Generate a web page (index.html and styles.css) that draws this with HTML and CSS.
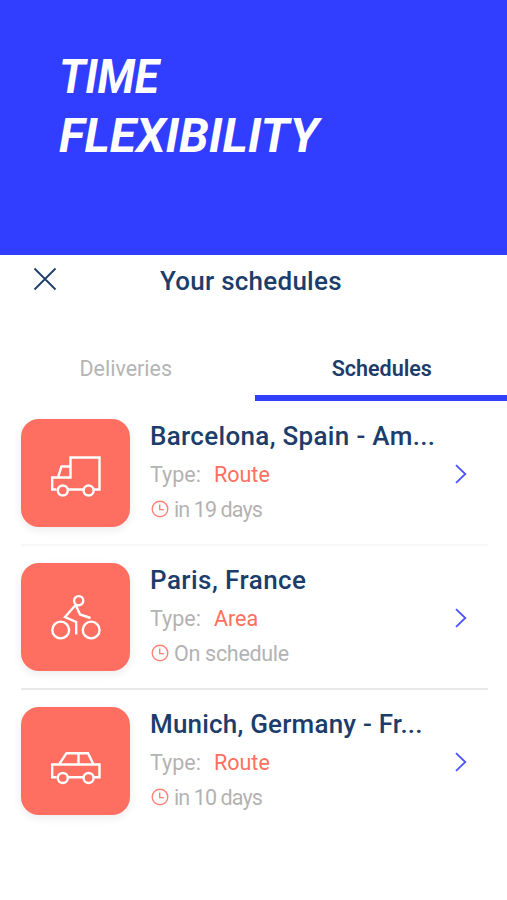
FILE: index.html
```html
<!DOCTYPE html>
<html lang="en">
<head>
<meta charset="utf-8">
<title>Your schedules</title>
<link rel="stylesheet" href="styles.css">
</head>
<body>
<svg class="defs" width="0" height="0">
  <symbol id="clock" viewBox="0 0 18 18"><circle cx="9" cy="9" r="7.8"/><path d="M8.7 4.6V9.6H13"/></symbol>
  <symbol id="chevron" viewBox="0 0 12 20"><path d="M1 1.2L10.3 10L1 18.8"/></symbol>
</svg>
<header class="hero"><h1><span class="hero-time">TIME</span><span class="hero-flex">FLEXIBILITY</span></h1></header>
<main>
  <div class="bar">
    <svg class="close" viewBox="0 0 24 24"><path d="M1.5 1.5L22.5 22.5M22.5 1.5L1.5 22.5"/></svg>
    <h2>Your schedules</h2>
  </div>
  <nav class="tabs">
    <a class="tab">Deliveries</a>
    <a class="tab active">Schedules</a>
  </nav>
  <section class="list">
    <article class="item">
      <div class="tile"><svg viewBox="0 0 52 44"><path d="M6.5 37.5H2.2V25.5H20.5V5.5H49.5V37.5H44M33 37.5H18M8 25.5L11.5 14.5H20.5"/><circle cx="12.8" cy="38.5" r="5"/><circle cx="38.6" cy="38.5" r="5"/></svg></div>
      <div class="info">
        <h3 class="t1">Barcelona, Spain - Am...</h3>
        <p class="type"><span class="label">Type:</span><span class="value">Route</span></p>
        <p class="when"><svg class="clock"><use href="#clock"/></svg><span class="days">in 19 days</span></p>
      </div>
      <svg class="chevron"><use href="#chevron"/></svg>
    </article>
    <article class="item">
      <div class="tile"><svg viewBox="0 0 52 44"><circle cx="10.7" cy="34" r="8.4"/><circle cx="41.2" cy="34" r="8.4"/><circle cx="28.7" cy="4.7" r="4.6"/><path d="M25.8 8.7L15 21L26.2 26V38.5M26 9.5L30 18.5L40.5 22"/></svg></div>
      <div class="info">
        <h3 class="t2">Paris, France</h3>
        <p class="type"><span class="label">Type:</span><span class="value area">Area</span></p>
        <p class="when"><svg class="clock"><use href="#clock"/></svg><span class="on">On schedule</span></p>
      </div>
      <svg class="chevron"><use href="#chevron"/></svg>
    </article>
    <article class="item">
      <div class="tile"><svg viewBox="0 0 52 44"><path d="M6.5 37.2H2.2V24.5H49.5V37.2H44M33 37.2H18M9 24.5L16.5 13.2H38L43.5 24.5M28.5 13.2V24.5"/><circle cx="12.8" cy="38" r="5"/><circle cx="38.6" cy="38" r="5"/></svg></div>
      <div class="info">
        <h3 class="t3">Munich, Germany - Fr...</h3>
        <p class="type"><span class="label">Type:</span><span class="value">Route</span></p>
        <p class="when"><svg class="clock"><use href="#clock"/></svg><span class="days">in 10 days</span></p>
      </div>
      <svg class="chevron"><use href="#chevron"/></svg>
    </article>
  </section>
</main>
</body>
</html>
```
FILE: styles.css
```css
* { box-sizing: border-box; margin: 0; padding: 0; }
body { width: 507px; height: 900px; overflow: hidden; background: #fff; font-family: Roboto, sans-serif; color: #1c3d6b; }
svg { fill: none; flex: none; overflow: visible; }
.defs { display: none; }
.hero { height: 255px; padding: 47px 0 0 59px; background: #323eff; color: #fff; }
h1 { font-size: 48px; line-height: 59px; font-weight: 700; font-style: italic; }
h1 span { display: block; }
.hero-time { transform: scaleX(.92); transform-origin: left; letter-spacing: -0.3px; }
.bar { display: grid; grid-template-columns: 160px auto; height: 80px; align-items: start; }
.close { width: 24px; height: 24px; margin: 12px 0 0 32.5px; stroke: #1c3d6b; stroke-width: 1.8; }
h2 { font-size: 26px; line-height: 36px; font-weight: 500; padding-top: 8px; letter-spacing: 0.25px; white-space: nowrap; }
.tabs { display: grid; grid-template-columns: 254.5px 1fr; height: 66px; }
.tab { font-size: 21.5px; line-height: 30px; padding: 19px 3px 0 0; text-align: center; color: #b5b5b5; border-bottom: 6px solid transparent; }
.active { font-weight: 600; padding: 19px 0 0 2px; color: #1c3d6b; border-bottom-color: #323eff; }
.list { padding: 1px 19px 0 21px; }
.item { display: flex; height: 144px; padding-top: 16.5px; border-bottom: 2px solid #f7f7f7; }
.item:nth-child(2) { border-bottom-color: #e8e8e8; }
.item:last-child { border-bottom: 0; }
.tile { width: 109px; height: 108px; border-radius: 18px; background: #ff6f61; box-shadow: 0 3px 10px rgba(0,0,0,.08); padding: 33px 0 0 28.5px; flex: none; }
.tile svg { width: 52px; height: 44px; stroke: #fff; stroke-width: 2.4; display: block; }
.info { width: 300px; margin: -2px 0 0 20px; white-space: nowrap; }
h3 { font-size: 26px; line-height: 39px; font-weight: 500; }
.t1 { letter-spacing: 0.32px; }
.t2 { letter-spacing: 0.45px; }
.t3 { letter-spacing: 0.2px; }
.type, .when { display: flex; font-size: 21.5px; line-height: 37px; color: #b3b3b3; }
.type { height: 35px; }
.label { width: 64px; }
.value { color: #ff6f61; }
.when { align-items: center; }
.days { letter-spacing: -0.9px; }
.on { letter-spacing: -0.3px; }
.clock { width: 18px; height: 18px; margin: 0 5px 0 1px; stroke: #ff8378; stroke-width: 1.4; }
.chevron { width: 12px; height: 20px; margin: 45px 0 0 5px; stroke: #4b53fa; stroke-width: 1.8; }
```
